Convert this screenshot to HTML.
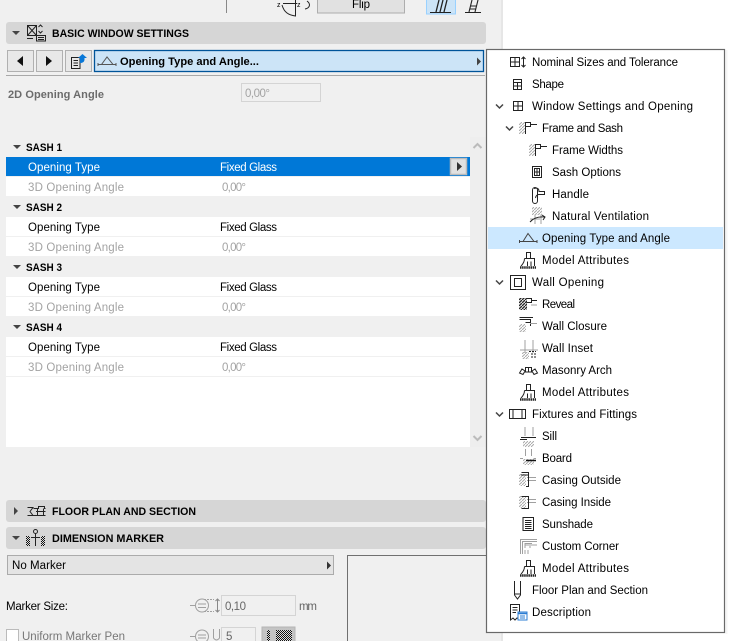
<!DOCTYPE html>
<html><head><meta charset="utf-8"><style>
html,body{margin:0;padding:0;background:#fff;width:733px;height:641px;overflow:hidden}
svg{display:block;position:absolute;left:0;top:0}
text{font-family:"Liberation Sans",sans-serif;font-size:11.5px;fill:#000}
.b{font-weight:bold;font-size:11px}
.g{fill:#a3a3a3}
.i{fill:none;stroke:#222;stroke-width:1}
.h{fill:none;stroke:#a0a0a0;stroke-width:1}
</style></head><body>
<svg width="733" height="641" viewBox="0 0 733 641" xmlns="http://www.w3.org/2000/svg">
<defs>
<pattern id="hat" width="3" height="3" patternUnits="userSpaceOnUse"><path d="M0 3L3 0" stroke="#aaa" stroke-width="1"/></pattern>
<pattern id="hatd" width="3" height="3" patternUnits="userSpaceOnUse"><rect width="3" height="3" fill="#ddd"/><path d="M0 3L3 0" stroke="#222" stroke-width="1.200"/></pattern>
<pattern id="chk" width="2" height="2" patternUnits="userSpaceOnUse"><rect width="2" height="2" fill="#ddd"/><rect width="1" height="1" fill="#111"/><rect x="1" y="1" width="1" height="1" fill="#111"/></pattern>
<g id="frame"><rect x="0" y="0" width="7" height="12" fill="url(#hat)"/><path class="i" d="M6.500 0.500H11.500V4.500H6.500ZM11.500 2.500H18M6.500 4.500V12"/></g>
<g id="attr"><path class="i" d="M6.500 0.500H10.500V6.500H6.500ZM4.500 6.500H14.500V14M4.500 6.500C4.500 10 3 12 1 14M7.500 9.500V14M11 9.500V14"/><path d="M0 15.500H16" stroke="#222" stroke-width="2.400" stroke-dasharray="1.500 .6"/></g>
<g id="wsill"><path class="h" d="M5.500 0V7M11.500 0V7M0 9.500H3M13.500 9.500H16"/><rect x="3" y="10" width="11" height="6" fill="url(#hat)"/></g>
<g id="casing"><rect x="0" y="1" width="7" height="12" fill="url(#hat)"/><path class="h" d="M8 4.500H17M8 7.500H17"/></g>
<path id="dn" d="M0 0H8L4 4Z" fill="#444"/>
<path id="chev" d="M0 0L3.500 3.500L7 0" fill="none" stroke="#444" stroke-width="1.500"/>
</defs>

<rect x="0" y="0" width="501" height="641" fill="#f0f0f0"/>
<rect x="501" y="0" width="2" height="641" fill="#e6e6e6"/>

<!-- top strip -->
<path d="M226.500 0V13" stroke="#888"/>
<path class="i" d="M282 5C284 12 288 15 295.500 16M295.500 0V16.500M283 3.500H297" stroke-dasharray="none"/>
<text x="277" y="7" style="font-size:7px">z</text><text x="297" y="7" style="font-size:7px">z</text>
<path class="i" d="M307 1C311 4 310 8 305 9"/>
<rect x="317.500" y="-2" width="87" height="15" fill="#e1e1e1" stroke="#adadad"/>
<text x="352" y="8" textLength="18">Flip</text>
<rect x="426.500" y="-1" width="29" height="15" fill="#cce4f7" stroke="#99d1ff"/>
<path class="i" d="M430 12.500H451"/>
<path d="M436 12L439 0M440 12L443 0M444 12L447 0" stroke="#222" stroke-width="1.300" fill="none"/>
<path class="i" d="M465 12.500H481"/>
<path d="M469 12L472 0M475 12L478 0M470 9H476M471 6H477" stroke="#222" stroke-width="1.100" fill="none"/>

<!-- Basic header -->
<rect x="6" y="22" width="480" height="22" rx="3" fill="#d6d6d6"/>
<use href="#dn" x="12" y="31"/>
<path class="i" d="M27.500 25.500H36.500V35.500H27.500ZM27.500 25.500L36.500 35.500M36.500 25.500L27.500 35.500M27 38.500H33M36.500 35.500H45.500V41H36.500ZM38 37.500H44M38 39.500H44M38.500 27L40.500 25L42.500 27M38.500 31L40.500 33L42.500 31"/>
<text class="b" x="52" y="37" textLength="137" lengthAdjust="spacingAndGlyphs">BASIC WINDOW SETTINGS</text>

<!-- toolbar -->
<rect x="7.500" y="50.500" width="26" height="21" fill="#e8e8e8" stroke="#b0b0b0"/>
<rect x="36.500" y="50.500" width="26" height="21" fill="#e8e8e8" stroke="#b0b0b0"/>
<rect x="65.500" y="50.500" width="26" height="21" fill="#e8e8e8" stroke="#b0b0b0"/>
<path d="M23 56V66L17 61Z" fill="#111"/><path d="M46 56V66L52 61Z" fill="#111"/>
<path class="i" d="M71.500 57.500H80V68.500H71.500ZM73.500 60.500H78M73.500 63H78M73.500 65.500H78"/>
<path d="M80 63V58H78L82.500 54L87 58H84.500V60Q84 63 80 63Z" fill="#0a78d7"/>
<rect x="94.500" y="50.500" width="389" height="21" fill="#cce4f7" stroke="#005499" stroke-width="1.300"/>
<path d="M98 64.500H101.500L107 57L113 64.500H101.500M113 64.500H116M98 63V66M116 63V66" fill="none" stroke="#555"/>
<text class="b" x="120" y="65" textLength="139" lengthAdjust="spacingAndGlyphs">Opening Type and Angle...</text>
<path d="M477 57.500V65.500L481 61.500Z" fill="#444"/>
<rect x="6" y="75" width="479" height="1" fill="#a8a8a8"/>

<text x="8" y="98" textLength="96" style="fill:#6b6b6b;font-weight:bold;font-size:11px">2D Opening Angle</text>
<rect x="241.500" y="83.500" width="79" height="18" fill="#f0f0f0" stroke="#d4d4d4" stroke-width="1"/>
<text class="g" x="245" y="97" textLength="25">0,00°</text>

<!-- table -->
<rect x="6" y="137" width="464" height="310" fill="#fff"/>
<rect x="470" y="137" width="16" height="310" fill="#eee"/>
<g fill="#f0f0f0">
<rect x="6" y="137" width="464" height="20"/>
<rect x="6" y="197" width="464" height="20"/>
<rect x="6" y="257" width="464" height="20"/>
<rect x="6" y="317" width="464" height="20"/>
<rect x="6" y="176" width="464" height="1"/><rect x="6" y="196" width="464" height="1"/>
<rect x="6" y="236" width="464" height="1"/><rect x="6" y="256" width="464" height="1"/>
<rect x="6" y="296" width="464" height="1"/><rect x="6" y="316" width="464" height="1"/>
<rect x="6" y="356" width="464" height="1"/><rect x="6" y="376" width="464" height="1"/>
</g>
<rect x="6" y="157" width="464" height="19" fill="#0078d7"/>
<rect x="450.500" y="158.500" width="16" height="16" fill="#e1e1e1" stroke="#bbb" stroke-width="1.500"/>
<path d="M457 162V171L462 166.500Z" fill="#333"/>
<path d="M473.500 148L477.500 144L481.500 148" fill="none" stroke="#bbb" stroke-width="2"/>
<path d="M473.500 436L477.500 440L481.500 436" fill="none" stroke="#bbb" stroke-width="2"/>

<use href="#dn" x="13" y="145"/><text class="b" x="26" y="151" textLength="36" lengthAdjust="spacingAndGlyphs">SASH 1</text>
<text x="28" y="171" textLength="72" style="fill:#fff">Opening Type</text><text x="220" y="171" textLength="57" style="fill:#fff">Fixed Glass</text>
<text class="g" x="28" y="191" textLength="96">3D Opening Angle</text><text class="g" x="222" y="191" textLength="24">0,00°</text>

<use href="#dn" x="13" y="205"/><text class="b" x="26" y="211" textLength="36" lengthAdjust="spacingAndGlyphs">SASH 2</text>
<text x="28" y="231" textLength="72">Opening Type</text><text x="220" y="231" textLength="57">Fixed Glass</text>
<text class="g" x="28" y="251" textLength="96">3D Opening Angle</text><text class="g" x="222" y="251" textLength="24">0,00°</text>

<use href="#dn" x="13" y="265"/><text class="b" x="26" y="271" textLength="36" lengthAdjust="spacingAndGlyphs">SASH 3</text>
<text x="28" y="291" textLength="72">Opening Type</text><text x="220" y="291" textLength="57">Fixed Glass</text>
<text class="g" x="28" y="311" textLength="96">3D Opening Angle</text><text class="g" x="222" y="311" textLength="24">0,00°</text>

<use href="#dn" x="13" y="325"/><text class="b" x="26" y="331" textLength="36" lengthAdjust="spacingAndGlyphs">SASH 4</text>
<text x="28" y="351" textLength="72">Opening Type</text><text x="220" y="351" textLength="57">Fixed Glass</text>
<text class="g" x="28" y="371" textLength="96">3D Opening Angle</text><text class="g" x="222" y="371" textLength="24">0,00°</text>

<!-- floor plan header -->
<rect x="6" y="500" width="480" height="22" rx="3" fill="#d6d6d6"/>
<path d="M14 507V515L18 511Z" fill="#444"/>
<path class="i" d="M27.500 507.500H33L30 511.500L33 515.500H27.500M33.500 508.500H38.500V506.500H44.500V508.500H45.500M37.500 508.500V515.500M43.500 508.500V515.500M36 511.500H45.500M33 515.500H45.500"/>
<text class="b" x="52" y="515" textLength="144" lengthAdjust="spacingAndGlyphs">FLOOR PLAN AND SECTION</text>

<!-- dimension marker header -->
<rect x="6" y="527" width="480" height="22" rx="3" fill="#d6d6d6"/>
<use href="#dn" x="12" y="536"/>
<path class="i" d="M35.500 533.500V546M31 537.500H40"/><circle cx="35.500" cy="531.500" r="2" class="i"/>
<rect x="26" y="536" width="4" height="10" fill="url(#chk)"/><rect x="41" y="536" width="4" height="10" fill="url(#chk)"/>
<text class="b" x="52" y="542" textLength="112" lengthAdjust="spacingAndGlyphs">DIMENSION MARKER</text>

<rect x="7.500" y="555.500" width="326" height="19" fill="#e4e4e4" stroke="#ababab"/>
<text x="12" y="569" textLength="54">No Marker</text>
<path d="M327 561.500V569.500L331 565.500Z" fill="#333"/>

<rect x="347" y="555" width="139" height="86" fill="#f0f0f0"/>
<path d="M347.500 641V555.500H486" fill="none" stroke="#707070" stroke-width="1"/>

<text x="6" y="610" textLength="62">Marker Size:</text>
<path class="h" d="M190 605.500H195M195.500 605.500a6.500 6.500 0 1 0 13 0a6.500 6.500 0 1 0 -13 0M198 604H206M198 607.500H206"/>
<path class="h" d="M204 599.500H214M204 611.500H214" stroke-dasharray="2 1"/>
<path d="M217.500 599V612M215.500 601L217.500 599L219.500 601M215.500 610L217.500 612L219.500 610" fill="none" stroke="#888"/>
<rect x="221.500" y="595.500" width="74" height="20" fill="#f0f0f0" stroke="#d4d4d4"/>
<text x="225" y="610" textLength="21" style="fill:#666">0,10</text>
<text x="299" y="610" textLength="18" style="fill:#666">mm</text>

<rect x="6.500" y="629.500" width="12" height="14" fill="#fff" stroke="#bbb"/>
<text x="22" y="640" textLength="103" style="fill:#777">Uniform Marker Pen</text>
<path class="h" d="M190 636.500H195M195.500 636.500a6.500 6.500 0 1 1 13 0a6.500 6.500 0 1 1 -13 0M198 635H206M198 638H206"/>
<path class="h" d="M213.500 629V638Q216.500 642 219.500 638V629"/>
<rect x="221.500" y="627.500" width="34" height="16" fill="#f0f0f0" stroke="#d4d4d4"/>
<text x="226" y="640" textLength="7" style="fill:#666">5</text>
<rect x="262" y="627" width="33" height="16" fill="#c4c4c4" stroke="#b5b5b5"/>
<rect x="267" y="630" width="3" height="11" fill="url(#chk)"/>
<rect x="276" y="630" width="16" height="11" fill="url(#chk)"/>

<!-- popup -->
<rect x="486.500" y="49.500" width="238" height="583" fill="#fff" stroke="#696969" stroke-width="1.200"/>
<rect x="725.500" y="50" width="2" height="584" fill="#f4f4f4"/>
<rect x="488" y="227" width="235" height="22" fill="#cce8ff"/>

<!-- chevrons -->
<use href="#chev" x="496" y="104.500"/>
<use href="#chev" x="506" y="126.500"/>
<use href="#chev" x="496" y="280.500"/>
<use href="#chev" x="496" y="412.500"/>

<!-- popup icons -->
<path class="i" d="M510.500 57.500H519.500V66.500H510.500ZM510.500 62H519.500M515 57.500V66.500M523.500 57V67M521.500 59L523.500 57L525.500 59M521.500 65L523.500 67L525.500 65"/>
<path class="i" d="M513.500 79.500H521.500V89.500H513.500ZM513.500 82.500H521.500M513.500 86H521.500M517.500 82.500V89.500"/>
<path class="i" d="M513.500 101.500H522.500V110.500H513.500ZM513.500 106H522.500M518 101.500V110.500"/>
<use href="#frame" x="519" y="122"/>
<use href="#frame" x="529" y="144"/>
<path class="i" d="M532.500 166.500H541.500V177.500H532.500ZM534.500 168.500H539.500V175.500H534.500ZM537 168.500V175.500M534.500 172H539.500"/>
<rect class="i" x="532.500" y="187.500" width="5" height="16" rx="2.500"/>
<path class="i" d="M534 188.500Q539 187 539 191.500H544.500V194.500H538.500Q536 195 535.500 198"/>
<rect x="532" y="207" width="10" height="8" fill="url(#hat)"/>
<path class="h" d="M535 215V224M541 215V224M530 219H540"/>
<path class="i" d="M530 222Q535 216 545 217M542 215L545 217L543 220"/>
<path d="M520 241.500H523L528 233.500L534 241.500H523M534 241.500H537M519.500 240V243M537 240V243" fill="none" stroke="#444"/>
<use href="#attr" x="520" y="252"/>
<rect x="510.500" y="275.500" width="15" height="14" fill="none" stroke="#222"/><rect x="514.500" y="278.500" width="7" height="8" fill="none" stroke="#222"/>
<rect x="519" y="298" width="8" height="12" fill="url(#hatd)"/><path class="i" d="M526.500 298.500H531.500V302.500H526.500M531.500 300.500H537"/><path class="h" d="M531 305H537"/>
<path class="i" d="M519.500 319.500H530.500V322.500H525.500M519.500 317.500H533M530.500 322.500V326"/><path class="h" d="M530 323.500H537"/><rect x="519" y="324" width="7" height="8" fill="url(#hat)"/>
<path class="h" d="M525 340V353M533 340V353M520 350H538"/><rect x="522" y="352" width="7" height="7" fill="url(#hat)"/><path class="i" d="M532 353V359M535 353V359M529 351.500H536" stroke-dasharray="2 1"/>
<path class="i" d="M519.500 373L522 369L525 371L523 374.500ZM525.500 367.500H531.500V372H525.500ZM537.500 373L535 369L532 371L534 374.500ZM528.500 367.500V372"/>
<use href="#attr" x="520" y="384"/>
<path class="i" d="M509.500 409.500H525.500V418.500H509.500ZM513 409.500V418.500M522 409.500V418.500"/>
<path class="h" d="M525 427V436M533 427V436"/><path class="i" d="M521 437.500H536M520 439.500H527"/><rect x="523" y="441" width="11" height="6" fill="url(#hat)"/>
<use href="#wsill" x="520" y="449"/><path d="M526 460.500H536" stroke="#111" stroke-width="1.500"/>
<use href="#casing" x="519" y="473"/><path class="i" d="M521.500 472.500H528.500V486.500H526M528.500 475H521"/>
<use href="#casing" x="519" y="495"/><path class="i" d="M521.500 496.500H528.500V508.500H521.500"/>
<path class="i" d="M523 517.500H533.500V530.500H523ZM525 520.500H531.500M525 522.500H531.500M525 524.500H531.500M525 526.500H531.500M525 528.500H531.500"/>
<path class="h" d="M520.500 554V539.500H537M522.500 554V541.500H537M525 548V543.500H532M525 545H537M525 550V554M528 550V554M530 546V548"/>
<use href="#attr" x="520" y="560"/>
<path class="i" d="M514.500 581V595L517.500 599L520.500 595V581M514.500 594H520.500"/>
<path class="i" d="M510.500 604.500H519.500V619L517 618L515 620L513 618L510.500 620ZM512.500 607.500H517.500M512.500 610H517.500M512.500 612.500H516"/>
<rect x="518" y="612" width="9" height="8" fill="#fff" stroke="#2b7cd3"/><path d="M518 613.500H527" stroke="#2b7cd3" stroke-width="1.500"/><path d="M520 616H525M520 618H525" stroke="#2b7cd3"/>

<!-- popup text -->
<text x="532" y="66" textLength="146">Nominal Sizes and Tolerance</text>
<text x="532" y="88" textLength="32">Shape</text>
<text x="532" y="110" textLength="161">Window Settings and Opening</text>
<text x="542" y="132" textLength="81">Frame and Sash</text>
<text x="552" y="154" textLength="71">Frame Widths</text>
<text x="552" y="176" textLength="69">Sash Options</text>
<text x="552" y="198" textLength="37">Handle</text>
<text x="552" y="220" textLength="97">Natural Ventilation</text>
<text x="542" y="242" textLength="128">Opening Type and Angle</text>
<text x="542" y="264" textLength="87">Model Attributes</text>
<text x="532" y="286" textLength="72">Wall Opening</text>
<text x="542" y="308" textLength="33">Reveal</text>
<text x="542" y="330" textLength="65">Wall Closure</text>
<text x="542" y="352" textLength="51">Wall Inset</text>
<text x="542" y="374" textLength="70">Masonry Arch</text>
<text x="542" y="396" textLength="87">Model Attributes</text>
<text x="532" y="418" textLength="105">Fixtures and Fittings</text>
<text x="542" y="440" textLength="15">Sill</text>
<text x="542" y="462" textLength="30">Board</text>
<text x="542" y="484" textLength="79">Casing Outside</text>
<text x="542" y="506" textLength="69">Casing Inside</text>
<text x="542" y="528" textLength="51">Sunshade</text>
<text x="542" y="550" textLength="77">Custom Corner</text>
<text x="542" y="572" textLength="87">Model Attributes</text>
<text x="532" y="594" textLength="116">Floor Plan and Section</text>
<text x="532" y="616" textLength="59">Description</text>
</svg>
</body></html>
